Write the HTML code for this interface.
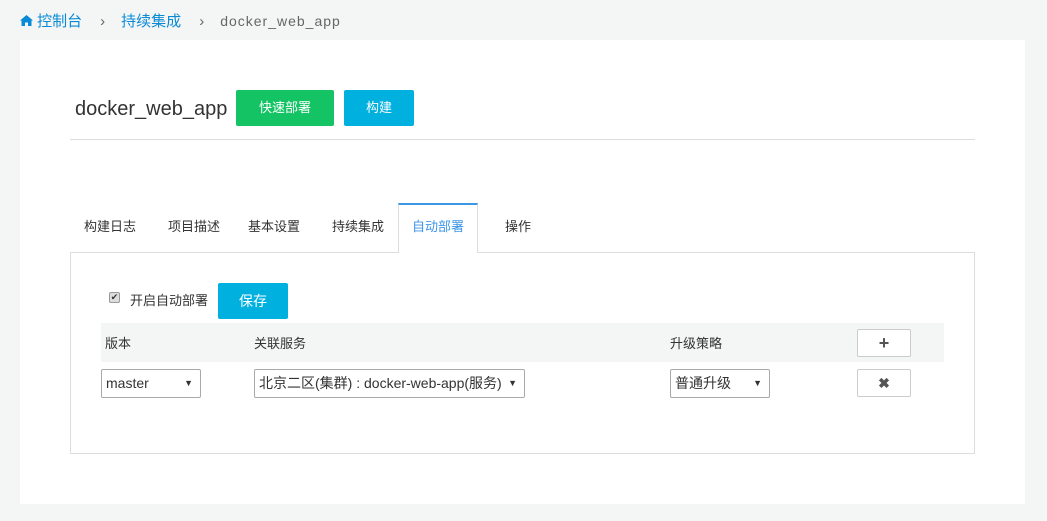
<!DOCTYPE html>
<html><head><meta charset="utf-8"><style>
*{box-sizing:border-box;margin:0;padding:0}
body{width:1047px;height:521px;background:#f4f5f5;font-family:"Liberation Sans","Noto Sans CJK SC",sans-serif;font-size:13px;color:#333;position:relative;overflow:hidden}
.a{position:absolute}
.bc{left:20px;top:10px;font-size:15px;color:#0a8ad6;white-space:nowrap}
.panel{left:20px;top:40px;width:1005px;height:464px;background:#fff}
.btn{position:absolute;color:#fff;font-size:13px;text-align:center;border-radius:2px}
.tab{position:absolute;top:203px;height:50px;line-height:48px;font-size:13px;color:#333;text-align:center}
.sel{position:absolute;height:29px;border:1px solid #a9a9a9;border-radius:2px;background:#fff;font-size:14px;line-height:27px;padding-left:4px;white-space:nowrap}
.sel span{position:absolute;right:7px;top:0;font-size:9px}
.ib{position:absolute;left:857px;width:54px;height:28px;border:1px solid #ccc;border-radius:2px;background:#fff;text-align:center;line-height:26px;color:#555;font-weight:bold;font-size:18px}
</style></head><body>
<div class="a bc"><svg width="13" height="11" viewBox="0 0 13 11" style="vertical-align:0px"><path d="M6.5 0L0 5.5h1.5V11h3.5V7.5h3V11h3.5V5.5H13z" fill="#0a8ad6"/></svg> 控制台<span style="color:#666;margin:0 16px 0 18px">›</span>持续集成<span style="color:#666;margin:0 16px 0 18px">›</span><span style="color:#666;letter-spacing:1px;font-size:14px">docker_web_app</span></div>
<div class="a panel"></div>
<div class="a" style="left:75px;top:98px;font-size:20px;color:#333">docker_web_app</div>
<div class="btn" style="left:236px;top:90px;width:98px;height:36px;line-height:36px;background:#13c364">快速部署</div>
<div class="btn" style="left:344px;top:90px;width:70px;height:36px;line-height:36px;background:#00b1e0">构建</div>
<div class="a" style="left:70px;top:139px;width:905px;height:1px;background:#ddd"></div>
<div class="a" style="left:70px;top:252px;width:905px;height:202px;border:1px solid #ddd"></div>
<div class="tab" style="left:70px;width:80px">构建日志</div>
<div class="tab" style="left:154px;width:80px">项目描述</div>
<div class="tab" style="left:234px;width:80px">基本设置</div>
<div class="tab" style="left:318px;width:80px">持续集成</div>
<div class="tab" style="left:398px;width:80px;background:#fff;border:1px solid #ddd;border-bottom:none;border-top:2px solid #3d95e6;color:#3d95e6;line-height:44px">自动部署</div>
<div class="tab" style="left:478px;width:80px">操作</div>
<div class="a" style="left:109px;top:292px;width:11px;height:11px;border:1px solid #999;border-radius:2px;background:#ddd;font-size:9px;line-height:9px;text-align:center">✔</div>
<div class="a" style="left:130px;top:290px">开启自动部署</div>
<div class="btn" style="left:218px;top:283px;width:70px;height:36px;line-height:36px;background:#00b1e0;font-size:14px">保存</div>
<div class="a" style="left:101px;top:323px;width:843px;height:39px;background:#f4f5f5"></div>
<div class="a" style="left:105px;top:333px">版本</div>
<div class="a" style="left:254px;top:333px">关联服务</div>
<div class="a" style="left:670px;top:333px">升级策略</div>
<div class="ib" style="top:329px">+</div>
<div class="ib" style="top:369px;font-size:14px">✖</div>
<div class="sel" style="left:101px;top:369px;width:100px">master<span>▼</span></div>
<div class="sel" style="left:254px;top:369px;width:271px">北京二区(集群) : docker-web-app(服务)<span>▼</span></div>
<div class="sel" style="left:670px;top:369px;width:100px">普通升级<span>▼</span></div>
</body></html>
